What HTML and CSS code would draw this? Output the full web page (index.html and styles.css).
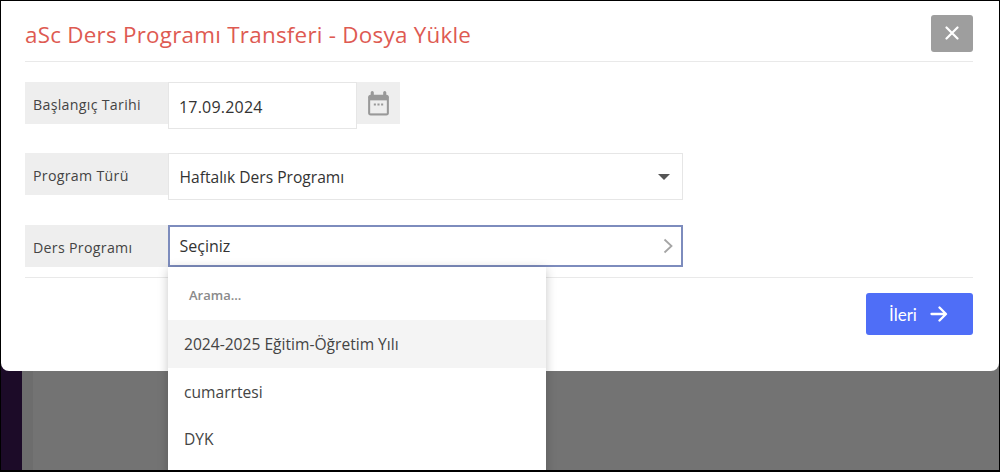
FILE: index.html
```html
<!DOCTYPE html>
<html lang="tr">
<head>
<meta charset="utf-8">
<title>aSc Ders Programı Transferi</title>
<link rel="stylesheet" href="styles.css">
</head>
<body>
<div class="screen">
  <div class="backdrop">
    <div class="strip-dark"></div>
    <div class="strip-mid"></div>
    <div class="strip-rest"></div>
  </div>
  <section class="modal">
    <header class="modal-head">
      <h1 class="modal-title">aSc Ders Programı Transferi - Dosya Yükle</h1>
      <button class="close-btn" aria-label="Kapat">
        <svg width="14" height="14" viewBox="0 0 14 14"><path d="M1.500 1.500l11 11M12.500 1.500l-11 11" stroke="#fff" stroke-width="2.200" stroke-linecap="round"/></svg>
      </button>
    </header>
    <div class="form">
      <div class="row row-date">
        <div class="label">Başlangıç Tarihi</div>
        <div class="field field-date">17.09.2024</div>
        <div class="addon">
          <svg class="cal" width="23" height="26" viewBox="0 0 22 25"><path d="M5 1.500v4M17 1.500v4" stroke="#999" stroke-width="3" stroke-linecap="round"/><rect x="1" y="3.500" width="20" height="20" rx="2.500" fill="#999"/><rect x="3" y="9" width="16" height="12.500" fill="#eee"/><path d="M6.500 13h2M10 13h2M13.500 13h2" stroke="#999" stroke-width="2"/></svg>
        </div>
      </div>
      <div class="row row-type">
        <div class="label">Program Türü</div>
        <div class="field field-select">
          <span>Haftalık Ders Programı</span>
          <svg class="caret" width="12" height="6" viewBox="0 0 12 6"><path d="M0 0h12L6 6z" fill="#555"/></svg>
        </div>
      </div>
      <div class="row row-program">
        <div class="label">Ders Programı</div>
        <div class="field field-active">
          <span>Seçiniz</span>
          <svg width="10" height="16" viewBox="0 0 10 16"><path d="M1.500 1.500L8.500 8l-7 6.500" fill="none" stroke="#a5a5a5" stroke-width="1.800"/></svg>
        </div>
      </div>
    </div>
    <footer class="modal-foot">
      <button class="next-btn">
        <span>İleri</span>
        <svg width="18" height="16" viewBox="0 0 18 16"><path d="M1.500 8h14M9.500 1.500L16 8l-6.500 6.500" fill="none" stroke="#fff" stroke-width="2.300" stroke-linecap="round" stroke-linejoin="round"/></svg>
      </button>
    </footer>
  </section>
  <div class="menu">
    <div class="menu-search">Arama...</div>
    <div class="menu-item is-hover">2024-2025 Eğitim-Öğretim Yılı</div>
    <div class="menu-item">cumarrtesi</div>
    <div class="menu-item">DYK</div>
  </div>
</div>
</body>
</html>
```
FILE: styles.css
```css
* { box-sizing: border-box; }
html, body { margin: 0; padding: 0; height: 100%; background: #000; overflow: hidden; }
body { font-family: "Open Sans", "Noto Sans", sans-serif; color: #333; }

.screen {
  position: relative;
  width: 1000px;
  height: 472px;
  border: 1px solid #000;
  border-bottom-width: 2px;
  overflow: hidden;
}

.backdrop { position: absolute; inset: 0; display: flex; }
.strip-dark { width: 21px; background: #1c0b28; }
.strip-mid { width: 11px; background: #6d6d6d; }
.strip-rest { flex: 1; background: #737373; }

.modal {
  position: absolute;
  left: 0;
  top: 0;
  width: 998px;
  height: 370px;
  background: #fff;
  border-radius: 0 0 8px 8px;
  padding: 14px 26px 0 24px;
}

.modal-head {
  display: flex;
  align-items: center;
  justify-content: space-between;
  height: 47px;
  border-bottom: 1px solid #e9e9e9;
  padding-bottom: 10px;
}
.modal-title {
  margin: 0;
  font-size: 22.400px;
  font-weight: 400;
  letter-spacing: 0.25px;
  color: #de5a52;
  position: relative;
  top: 1px;
}
.close-btn {
  width: 42px;
  height: 37px;
  border: 0;
  border-radius: 3px;
  background: #9e9e9e;
  display: flex;
  align-items: center;
  justify-content: center;
  padding: 0;
}

.form { display: flex; flex-direction: column; }
.row { display: flex; align-items: flex-start; }
.row-date { margin-top: 20px; }
.row-type { margin-top: 24px; }
.row-program { margin-top: 25px; }

.label {
  width: 143px;
  height: 42px;
  background: #eeeeee;
  padding-left: 8px;
  font-size: 14.200px;
  letter-spacing: 0.3px;
  line-height: 46px;
  color: #444;
}
.field {
  height: 47px;
  background: #fff;
  border: 1px solid #e6e6e6;
  font-size: 16px;
  color: #333;
  display: flex;
  align-items: center;
  padding: 0 11px;
  justify-content: space-between;
}
.field-date { width: 189px; padding: 2px 10px 0; letter-spacing: 0.2px; }
.addon {
  width: 43px;
  height: 42px;
  background: #eeeeee;
  display: flex;
  align-items: center;
  justify-content: center;
}
.cal { margin-top: 2px; }
.field-select { width: 515px; font-size: 15.600px; padding-left: 10.500px; }
.caret { margin-right: 1px; margin-top: 1px; }
.field-active {
  width: 515px;
  height: 42px;
  border: 2px solid #7d8cbd;
  padding: 0 8px 0 9.500px;
}

.modal-foot {
  margin-top: 10px;
  border-top: 1px solid #e9e9e9;
  display: flex;
  justify-content: flex-end;
  padding-top: 15px;
}
.next-btn {
  width: 107px;
  height: 42px;
  border: 0;
  border-radius: 3px;
  background: #4f6ef7;
  color: #fff;
  font-family: "Lato", sans-serif;
  font-size: 17px;
  display: flex;
  align-items: center;
  justify-content: center;
  gap: 13px;
  padding: 0 2px 0 0;
}

.menu {
  position: absolute;
  left: 167px;
  top: 266px;
  width: 378px;
  height: 210px;
  background: #fff;
  box-shadow: 0 2px 10px rgba(0, 0, 0, 0.22);
}
.menu-search {
  height: 53px;
  padding-left: 21px;
  line-height: 56px;
  font-size: 13px;
  font-weight: 600;
  color: #8a8a8a;
}
.menu-item {
  height: 47.500px;
  padding-left: 16px;
  line-height: 48.500px;
  font-size: 15.600px;
  color: #444;
}
.menu-item.is-hover { background: #f4f4f4; }
```
